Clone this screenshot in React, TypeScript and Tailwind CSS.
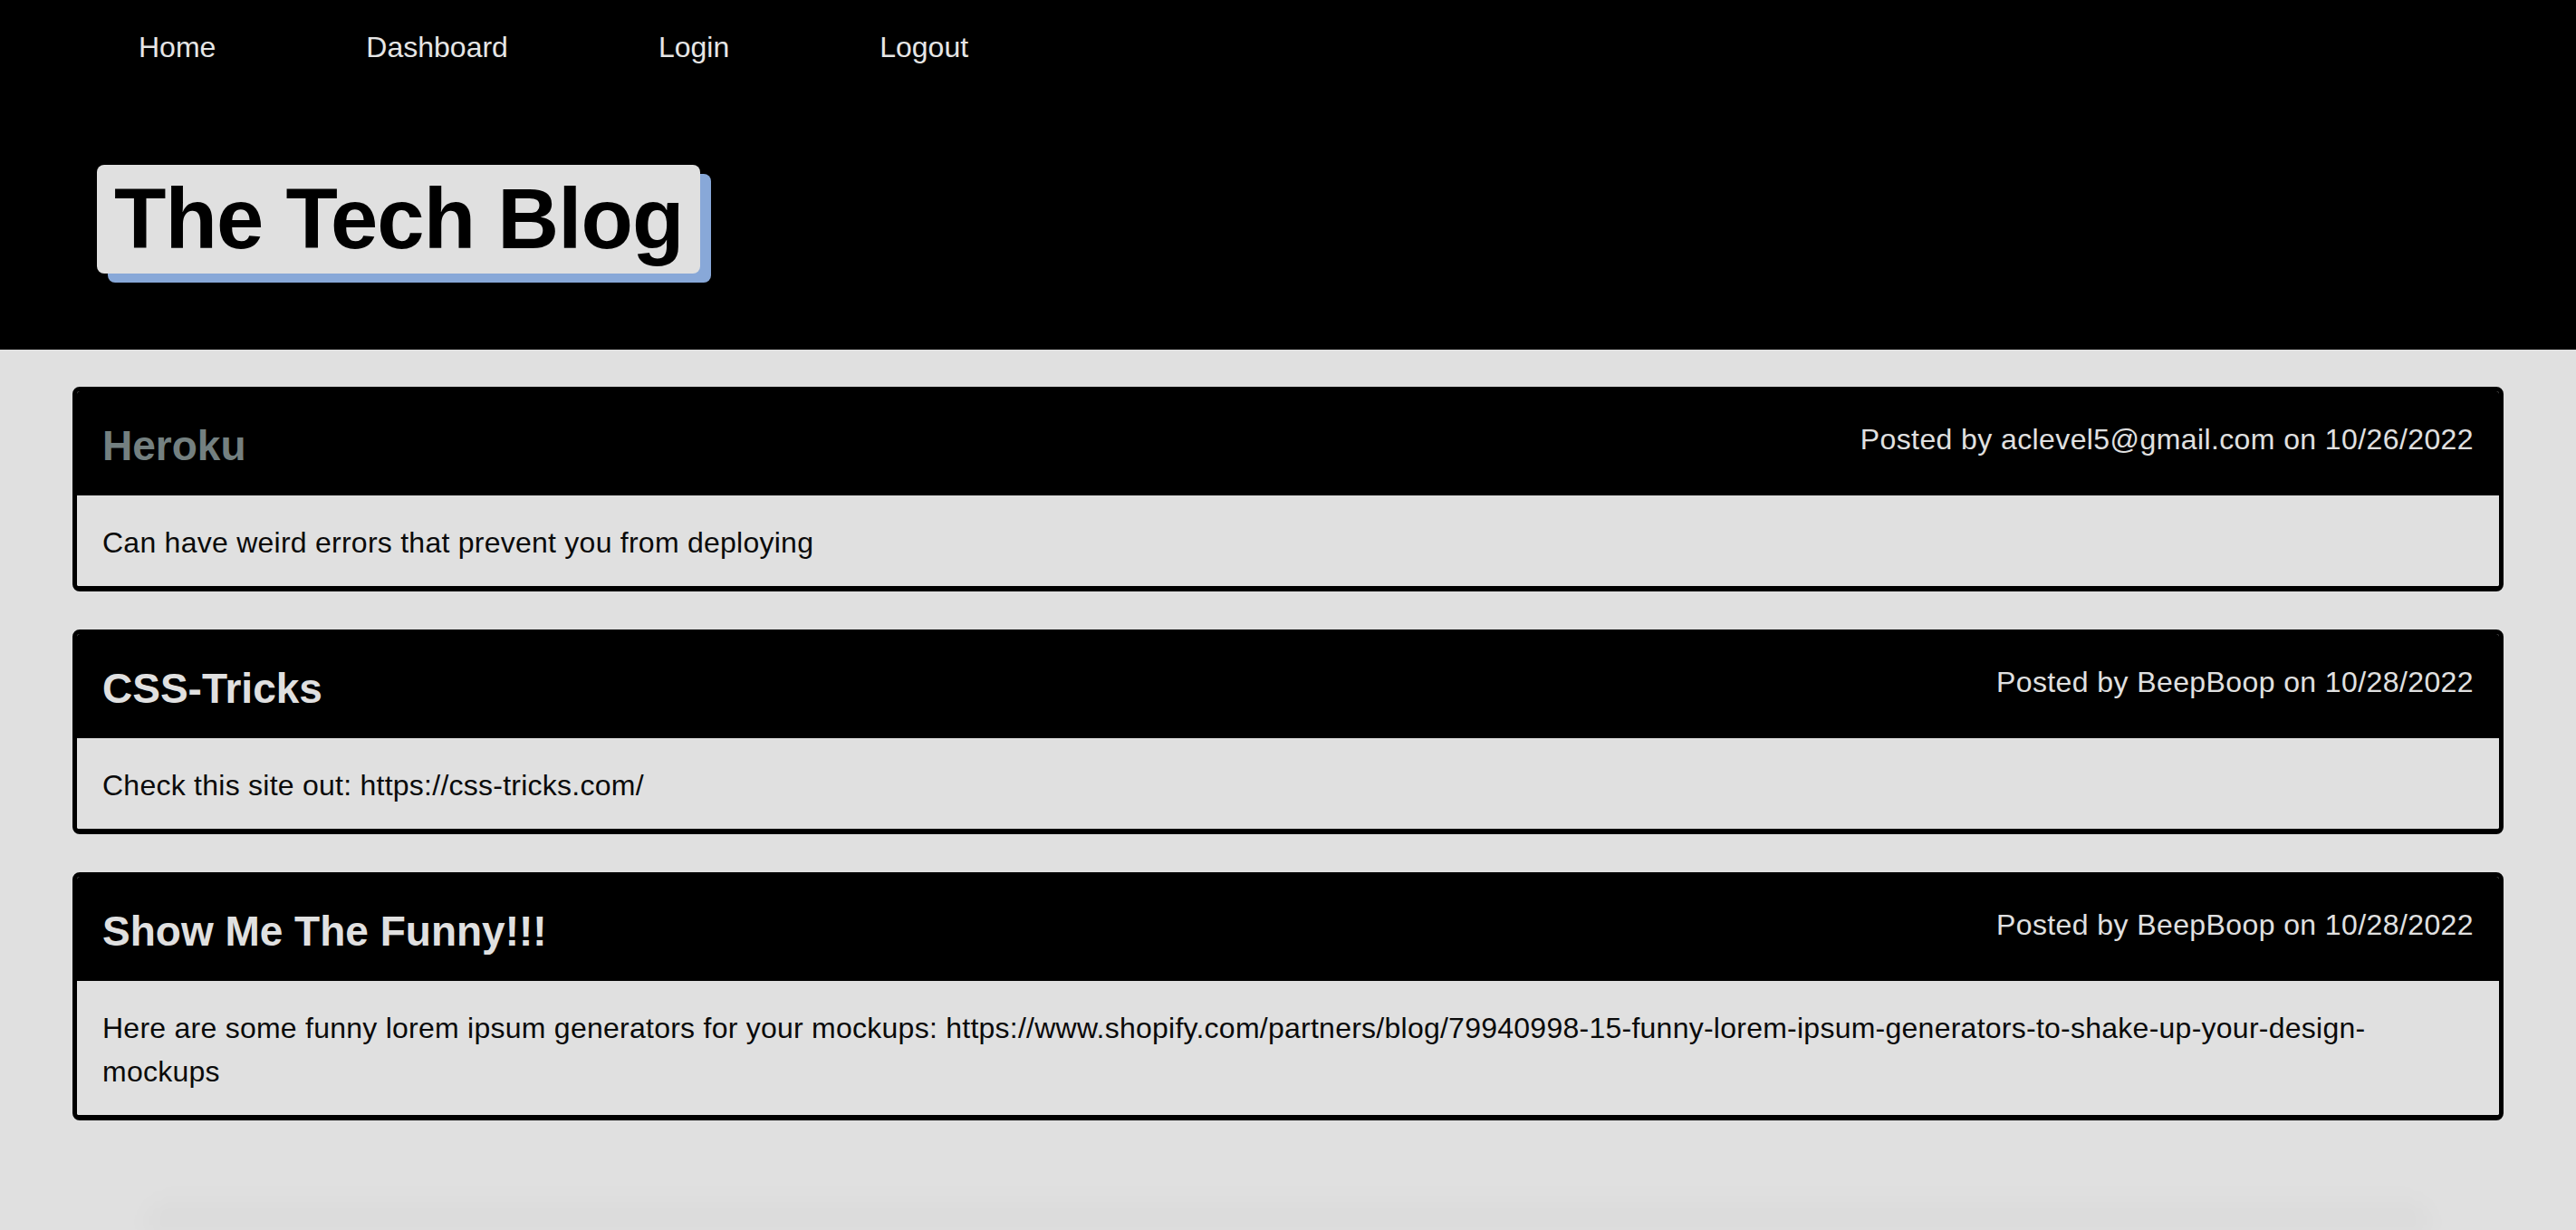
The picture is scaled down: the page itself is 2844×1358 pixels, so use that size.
const posts = [
  {
    title: 'Heroku',
    author: 'aclevel5@gmail.com',
    date: '10/26/2022',
    body: 'Can have weird errors that prevent you from deploying',
    visited: true,
  },
  {
    title: 'CSS-Tricks',
    author: 'BeepBoop',
    date: '10/28/2022',
    body: 'Check this site out: https://css-tricks.com/',
    visited: false,
  },
  {
    title: 'Show Me The Funny!!!',
    author: 'BeepBoop',
    date: '10/28/2022',
    body: 'Here are some funny lorem ipsum generators for your mockups: https://www.shopify.com/partners/blog/79940998-15-funny-lorem-ipsum-generators-to-shake-up-your-design-mockups',
    visited: false,
  },
];

const navLinks = ['Home', 'Dashboard', 'Login', 'Logout'];

function PostCard({ post }: { post: (typeof posts)[number] }) {
  return (
    <article className="rounded-lg border-[5px] border-b-[6px] border-black overflow-hidden">
      <div className="flex justify-between items-start h-[115px] bg-black px-[28px]">
        <h2
          className={`mt-[35px] text-[46px] leading-[50px] font-bold ${
            post.visited ? 'text-[#748080]' : 'text-[#e0e0e0]'
          }`}
        >
          {post.title}
        </h2>
        <p className="mt-[29px] text-[32px] leading-[48px] tracking-[0.4px] text-[#e0e0e0]">
          Posted by {post.author} on {post.date}
        </p>
      </div>
      <div className="bg-[#e0e0e0] px-[28px] pt-[28px] pb-[24px]">
        <p className="text-[32px] leading-[48px] tracking-[0.25px] text-[#0a0a0a] break-words">
          {post.body}
        </p>
      </div>
    </article>
  );
}

export default function App() {
  return (
    <div
      className="flex min-h-[1358px] flex-col bg-[#e0e0e0]"
      style={{ fontFamily: '"Liberation Sans", Arial, sans-serif' }}
    >
      <header className="h-[386px] bg-black">
        <nav className="flex gap-[166px] pl-[153px] pt-[28px]">
          {navLinks.map((link) => (
            <a key={link} href="#" className="text-[32px] leading-[48px] text-[#e6e6e6]">
              {link}
            </a>
          ))}
        </nav>
        <div className="pl-[107px] pt-[106px]">
          <h1 className="inline-block rounded-lg bg-[#e0e0e0] px-[19px] text-[94px] leading-[120px] font-bold tracking-[-0.01em] text-black shadow-[12px_10px_0_#88a8d8]">
            The Tech Blog
          </h1>
        </div>
      </header>

      <main className="flex flex-col gap-[42px] px-[80px] pt-[41px] pb-[40px]">
        {posts.map((post) => (
          <PostCard key={post.title} post={post} />
        ))}
      </main>

      {/* faint shadow of the footer peeking in at the bottom */}
      <div className="mx-[160px] mt-auto h-[45px] rounded-t-[90px] bg-gradient-to-b from-transparent to-black/[0.03] blur-md" />
    </div>
  );
}
